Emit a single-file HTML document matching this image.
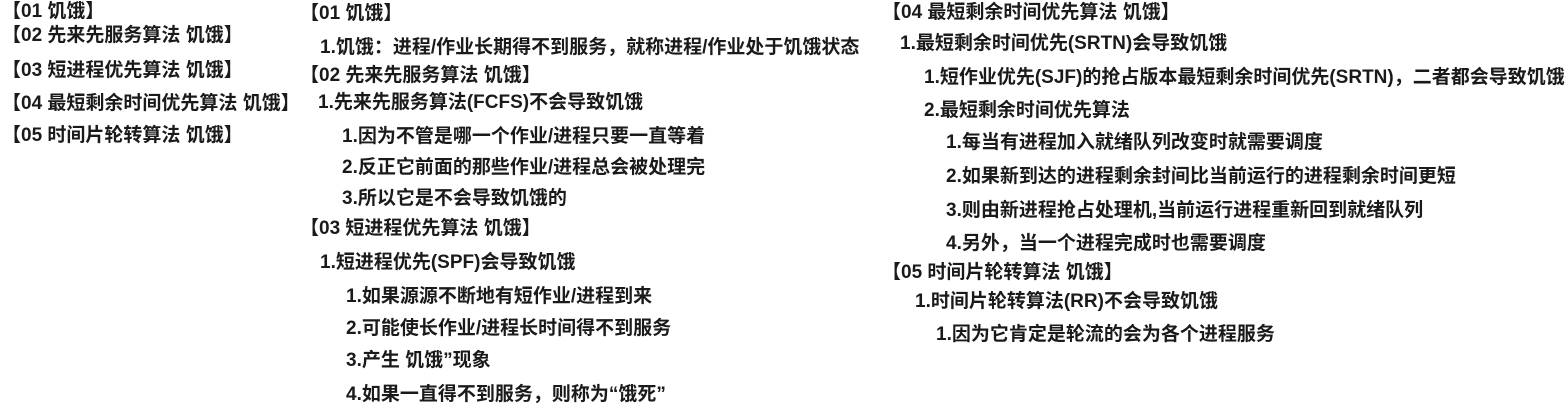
<!DOCTYPE html>
<html><head><meta charset="utf-8"><style>
body{margin:0;width:1568px;height:414px;background:#fff;overflow:hidden;position:relative;font-family:"Liberation Sans","Noto Sans CJK SC",sans-serif;font-weight:bold;font-size:19px;color:#1a1a1a}
div{position:absolute;white-space:nowrap;line-height:20px}
</style></head><body>
<div style="left:2px;top:2px">【01 饥饿】</div>
<div style="left:2px;top:26px">【02 先来先服务算法 饥饿】</div>
<div style="left:2px;top:61px">【03 短进程优先算法 饥饿】</div>
<div style="left:2px;top:94px">【04 最短剩余时间优先算法 饥饿】</div>
<div style="left:2px;top:126px">【05 时间片轮转算法 饥饿】</div>

<div style="left:300px;top:4px">【01 饥饿】</div>
<div style="left:320px;top:38px">1.饥饿：进程/作业长期得不到服务，就称进程/作业处于饥饿状态</div>
<div style="left:300px;top:66px">【02 先来先服务算法 饥饿】</div>
<div style="left:318px;top:93px">1.先来先服务算法(FCFS)不会导致饥饿</div>
<div style="left:342px;top:127px">1.因为不管是哪一个作业/进程只要一直等着</div>
<div style="left:342px;top:158px">2.反正它前面的那些作业/进程总会被处理完</div>
<div style="left:342px;top:189px">3.所以它是不会导致饥饿的</div>
<div style="left:300px;top:219px">【03 短进程优先算法 饥饿】</div>
<div style="left:320px;top:253px">1.短进程优先(SPF)会导致饥饿</div>
<div style="left:346px;top:287px">1.如果源源不断地有短作业/进程到来</div>
<div style="left:346px;top:319px">2.可能使长作业/进程长时间得不到服务</div>
<div style="left:346px;top:351px">3.产生 饥饿”现象</div>
<div style="left:346px;top:385px">4.如果一直得不到服务，则称为“饿死”</div>

<div style="left:882px;top:3px">【04 最短剩余时间优先算法 饥饿】</div>
<div style="left:900px;top:34px">1.最短剩余时间优先(SRTN)会导致饥饿</div>
<div style="left:924px;top:68px">1.短作业优先(SJF)的抢占版本最短剩余时间优先(SRTN)，二者都会导致饥饿</div>
<div style="left:924px;top:101px">2.最短剩余时间优先算法</div>
<div style="left:946px;top:133px">1.每当有进程加入就绪队列改变时就需要调度</div>
<div style="left:946px;top:167px">2.如果新到达的进程剩余封间比当前运行的进程剩余时间更短</div>
<div style="left:946px;top:201px">3.则由新进程抢占处理机,当前运行进程重新回到就绪队列</div>
<div style="left:946px;top:234px">4.另外，当一个进程完成时也需要调度</div>
<div style="left:882px;top:263px">【05 时间片轮转算法 饥饿】</div>
<div style="left:915px;top:292px">1.时间片轮转算法(RR)不会导致饥饿</div>
<div style="left:936px;top:325px">1.因为它肯定是轮流的会为各个进程服务</div>
</body></html>
